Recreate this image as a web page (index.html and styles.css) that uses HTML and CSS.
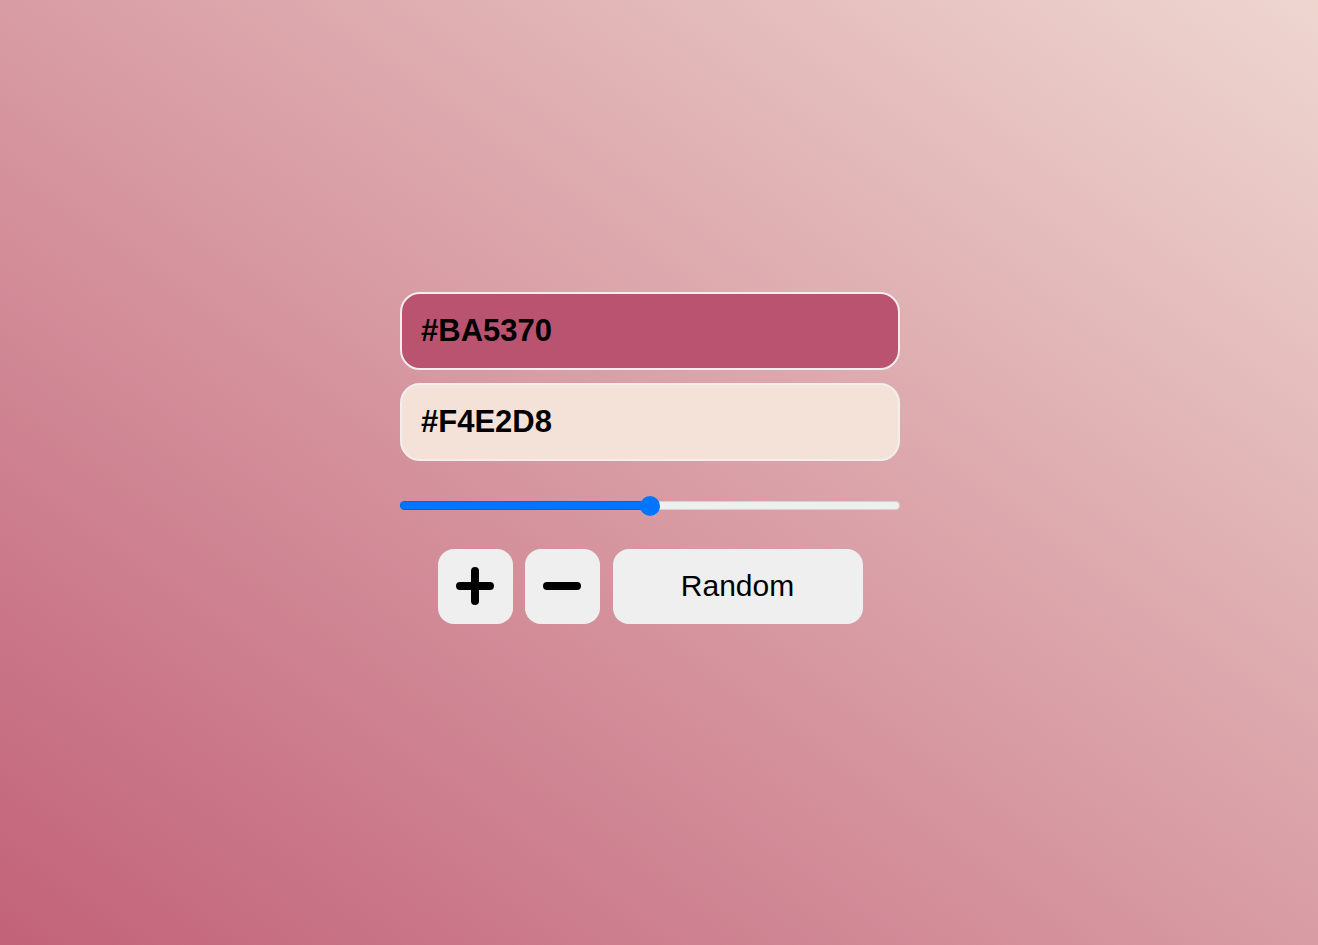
FILE: index.html
```html
<!DOCTYPE html>
<html lang="en">
<head>
<meta charset="utf-8">
<title>Gradient Generator</title>
<link rel="stylesheet" href="styles.css">
</head>
<body>
<main class="panel">
  <input class="color-field color-field--first" type="text" value="#BA5370" aria-label="First color">
  <input class="color-field color-field--second" type="text" value="#F4E2D8" aria-label="Second color">
  <input class="slider" type="range" min="0" max="100" value="50" aria-label="Gradient position">
  <div class="actions">
    <button class="btn btn--icon" aria-label="Add">
      <svg viewBox="0 0 40 38" width="40" height="38"><path d="M20 4 V34 M5 19 H35" stroke="#000" stroke-width="8" stroke-linecap="round" fill="none"/></svg>
    </button>
    <button class="btn btn--icon" aria-label="Remove">
      <svg viewBox="0 0 40 38" width="40" height="38"><path d="M5 19 H35" stroke="#000" stroke-width="8" stroke-linecap="round" fill="none"/></svg>
    </button>
    <button class="btn btn--text">Random</button>
  </div>
</main>
</body>
</html>
```

FILE: styles.css
```css
html, body {
  margin: 0;
  padding: 0;
  height: 100%;
}

body {
  box-sizing: border-box;
  min-height: 945px;
  padding-right: 18px;
  background: linear-gradient(to top right, #c26279 0%, #eed6cf 100%);
  font-family: "Liberation Sans", Arial, sans-serif;
  display: flex;
  justify-content: center;
  align-items: flex-start;
}

.panel {
  width: 500px;
  margin-top: 292px;
  display: flex;
  flex-direction: column;
}

.color-field {
  box-sizing: border-box;
  width: 500px;
  height: 78px;
  border: 2px solid #f2eeee;
  border-radius: 20px;
  padding: 0 0 0 19px;
  font-family: "Liberation Sans", Arial, sans-serif;
  font-size: 31px;
  font-weight: bold;
  color: #000;
  outline: none;
}

.color-field--first {
  background: #ba5370;
}

.color-field--second {
  background: #f4e2d8;
  margin-top: 13px;
}

.slider {
  -webkit-appearance: none;
  appearance: none;
  width: 500px;
  height: 9px;
  margin: 40px 0 0 0;
  padding: 0;
  border-radius: 5px;
  background: linear-gradient(to right, #0075ff 0%, #0075ff 50%, #efefef 50%, #efefef 100%);
  box-shadow: inset 0 0 0 1px rgba(0,0,0,0.12);
  outline: none;
}

.slider::-webkit-slider-thumb {
  -webkit-appearance: none;
  appearance: none;
  width: 20px;
  height: 20px;
  border-radius: 50%;
  background: #0075ff;
  border: none;
}

.actions {
  display: flex;
  justify-content: center;
  gap: 12px;
  margin-top: 39px;
}

.btn {
  height: 75px;
  border: none;
  border-radius: 16px;
  background: #efefef;
  color: #000;
  font-family: "Liberation Sans", Arial, sans-serif;
  display: flex;
  align-items: center;
  justify-content: center;
  padding: 0 0 2px 0;
  cursor: pointer;
}

.btn--icon {
  width: 75px;
}

.btn--text {
  width: 250px;
  margin-left: 1px;
  font-size: 30px;
}
```
